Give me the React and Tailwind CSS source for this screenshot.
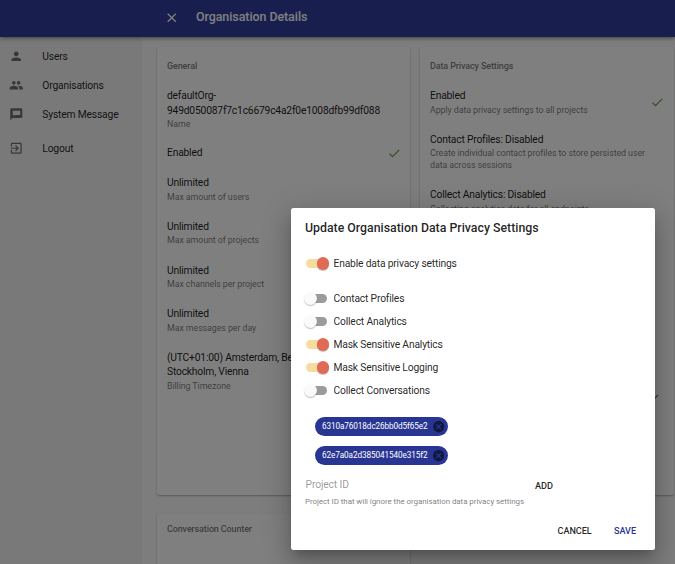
import { MdPerson, MdPeople, MdExitToApp, MdClose, MdCheck, MdCancel } from 'react-icons/md';

function MessageIcon({ className }) {
  return (
    <svg viewBox="0 0 24 24" fill="currentColor" className={className}>
      <path
        fillRule="evenodd"
        d="M4 2h16a2 2 0 0 1 2 2v12a2 2 0 0 1-2 2H6l-4 4V4a2 2 0 0 1 2-2zM6.2 6.4v6.8h2v1.6l2.2-1.6H18.6V6.4z"
      />
    </svg>
  );
}

const nav = [
  { icon: MdPerson, label: 'Users', row: 'h-[29px]' },
  { icon: MdPeople, label: 'Organisations', row: 'h-[29px]' },
  { icon: MessageIcon, label: 'System Message', row: 'h-[29px]' },
  { icon: MdExitToApp, label: 'Logout', row: 'h-[29px] mt-[5px]' },
];

function Item({ title, sub, check, className = '' }) {
  return (
    <div className={`flex items-center justify-between ${className}`}>
      <div>
        <p className="whitespace-pre-line text-[10.3px] leading-[14.5px] tracking-[-0.2px] text-black/90">{title}</p>
        {sub && <p className="whitespace-pre-line text-[8.9px] leading-[12.1px] tracking-[-0.09px] text-black/54">{sub}</p>}
      </div>
      {check && <MdCheck className="size-[14.5px] shrink-0 text-[#67a04a]" />}
    </div>
  );
}

function Card({ title, pad = 'pt-[12px] pr-[9px]', children }) {
  return (
    <section className={`rounded-[2.5px] bg-white pl-[10px] shadow-[0_1px_2px_rgba(0,0,0,0.3)] ${pad}`}>
      <h2 className="text-[9px] leading-[14px] font-medium tracking-[-0.13px] text-black/54">{title}</h2>
      {children}
    </section>
  );
}

function Toggle({ on, label, className = '' }) {
  return (
    <div className={`flex h-[23px] items-center ${className}`}>
      <span className={`flex h-[9px] w-[21px] items-center rounded-full ${on ? 'justify-end bg-[#f5dda2]' : 'bg-[#9b9b9b]'}`}>
        <span
          className={`size-[12.5px] shrink-0 rounded-full shadow-[0_1px_1px_rgba(0,0,0,0.25)] ${on ? '-mr-[2px] bg-[#e06a55]' : '-ml-[2px] bg-[#fafafa]'}`}
        />
      </span>
      <span className="ml-[6.5px] text-[10.3px] tracking-[-0.18px] text-black/87">{label}</span>
    </div>
  );
}

function Chip({ label }) {
  return (
    <div className="flex h-[19px] w-[133px] items-center justify-between rounded-full bg-[#283593] pr-[3px] pl-[7px] text-white">
      <span className="text-[8.2px] tracking-[-0.1px]">{label}</span>
      <MdCancel className="size-[13.3px] text-[#12173f]" />
    </div>
  );
}

export default function App() {
  return (
    <div className="relative h-[564px] w-[675px] overflow-hidden bg-[#fafafa] font-[Roboto,sans-serif]">
      <header className="relative flex h-[37px] items-center bg-[#303f9f] pb-[2px] pl-[164px] text-white shadow-[0_1px_4px_rgba(0,0,0,0.5)]">
        <MdClose className="size-[15.5px]" />
        <h1 className="ml-[16.5px] text-[12.4px] font-medium tracking-[-0.04px]">Organisation Details</h1>
      </header>
      <div className="flex h-[527px]">
        <nav className="w-[142px] shrink-0 bg-[#f2f2f2] pt-[5px]">
          {nav.map(({ icon: Icon, label, row }) => (
            <div key={label} className={`flex items-center pl-[8.5px] ${row}`}>
              <Icon className="size-[14.5px] text-black/54" />
              <span className="ml-[19.3px] text-[10.3px] tracking-[-0.18px] text-black/87">{label}</span>
            </div>
          ))}
        </nav>
        <main className="grid grid-cols-[253px_254px] grid-rows-[448px_80px] gap-x-[10px] gap-y-[19px] pt-[10px] pl-[15px]">
          <Card title="General">
            <Item className="mt-[16px]" title={'defaultOrg-\n949d050087f7c1c6679c4a2f0e1008dfb99df088'} sub="Name" />
            <Item className="mt-[15.6px]" title="Enabled" check />
            <Item className="mt-[16.2px]" title="Unlimited" sub="Max amount of users" />
            <Item className="mt-[17px]" title="Unlimited" sub="Max amount of projects" />
            <Item className="mt-[17px]" title="Unlimited" sub="Max channels per project" />
            <Item className="mt-[17px]" title="Unlimited" sub="Max messages per day" />
            <Item
              className="mt-[17px]"
              title={'(UTC+01:00) Amsterdam, Be\nStockholm, Vienna'}
              sub="Billing Timezone"
            />
          </Card>
          <Card title="Data Privacy Settings" pad="pt-[12px] pr-[10px]">
            <Item className="mt-[16px]" title="Enabled" sub="Apply data privacy settings to all projects" check />
            <Item
              className="mt-[17px]"
              title="Contact Profiles: Disabled"
              sub={'Create individual contact profiles to store persisted user\ndata across sessions'}
            />
            <Item className="mt-[17px]" title="Collect Analytics: Disabled" sub="Collecting analytics data for all endpoints" />
            <div className="mt-[176px] flex justify-end pr-[4px]">
              <MdCheck className="size-[14.5px] text-[#4f6f6a]" />
            </div>
          </Card>
          <Card title="Conversation Counter" pad="pt-[8px]" />
        </main>
      </div>

      <div className="absolute inset-0 bg-black/50" />

      <div
        role="dialog"
        className="absolute top-[208px] left-[291px] h-[342px] w-[364px] rounded-[2.5px] bg-white shadow-[0_7px_9px_-4px_rgba(0,0,0,0.2),0_15px_23px_2px_rgba(0,0,0,0.14),0_5px_28px_5px_rgba(0,0,0,0.12)]"
      >
        <h2 className="pt-[11px] pl-[14px] text-[12.33px] leading-[19px] font-medium text-black/87">
          Update Organisation Data Privacy Settings
        </h2>
        <div className="mt-[14px] pl-[15px]">
          <Toggle on label="Enable data privacy settings" className="mb-[12px]" />
          <Toggle label="Contact Profiles" />
          <Toggle label="Collect Analytics" />
          <Toggle on label="Mask Sensitive Analytics" />
          <Toggle on label="Mask Sensitive Logging" />
          <Toggle label="Collect Conversations" />
        </div>
        <div className="mt-[15px] flex flex-col gap-[10px] pl-[24px]">
          <Chip label="6310a76018dc26bb0d5f65e2" />
          <Chip label="62e7a0a2d385041540e315f2" />
        </div>
        <div className="mt-[9px] flex h-[20px] items-center pl-[14.5px]">
          <span className="w-[229.5px] pt-[1px] text-[10.3px] tracking-[-0.12px] text-black/42">Project ID</span>
          <button className="mt-[4px] text-[9.2px] font-medium tracking-[-0.1px] text-black/87">ADD</button>
        </div>
        <p className="mt-[1px] pl-[14px] text-[7.95px] leading-[13px] tracking-[-0.05px] text-black/54">
          Project ID that will ignore the organisation data privacy settings
        </p>
        <div className="mt-[17px] flex justify-end gap-[22.5px] pr-[19px] text-[9.1px] leading-[13px] font-medium tracking-[-0.07px]">
          <button className="text-black/87">CANCEL</button>
          <button className="text-[#283593]">SAVE</button>
        </div>
      </div>
    </div>
  );
}
